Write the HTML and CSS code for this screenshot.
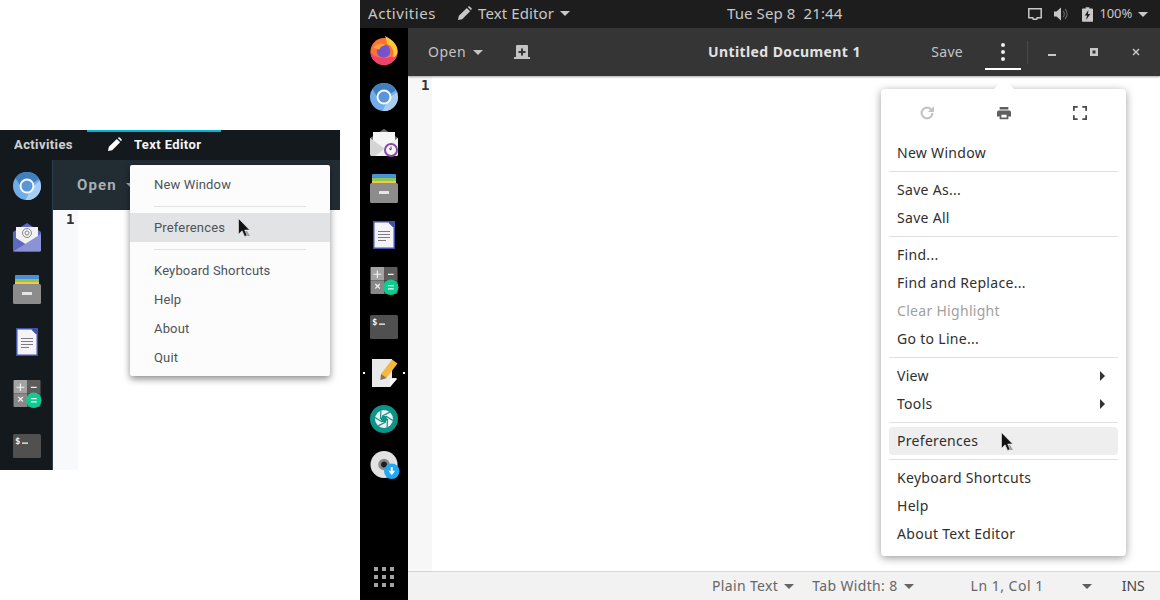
FILE: index.html
```html
<!DOCTYPE html>
<html lang="en">
<head>
<meta charset="utf-8">
<title>Text Editor</title>
<link rel="stylesheet" href="styles.css">
</head>
<body>
<svg class="defs" width="0" height="0">
  <defs>
    <symbol id="i-chromium" viewBox="0 0 28 28">
      <circle cx="14" cy="14" r="14" fill="#73ade8"/>
      <path d="M14 0a14 14 0 0 0-11.500 6L8 15h6l12-8A14 14 0 0 0 14 0z" fill="#3f7fbd"/>
      <path d="M19 15l-6.500 13a14 14 0 0 0 15.500-14l-1-5z" fill="#a6cdf2"/>
      <circle cx="14" cy="14" r="7.500" fill="#f4f8fc"/>
      <circle cx="14" cy="14" r="5.500" fill="#5c94d8"/>
    </symbol>
    <symbol id="i-folder" viewBox="0 0 28 29">
      <rect x="2" y="0" width="24" height="6" rx="1" fill="#4a90d9"/>
      <rect x="2" y="4" width="24" height="5" fill="#8bc850"/>
      <rect x="2" y="7" width="24" height="5" fill="#f7c64f"/>
      <rect x="0" y="9" width="28" height="20" rx="1.500" fill="#8c8c8c"/>
      <rect x="9" y="17" width="10" height="3" rx=".5" fill="#e6e6e6"/>
    </symbol>
    <symbol id="i-writer" viewBox="0 0 22 28">
      <path d="M0 0h22v28H0z" fill="#3f51ad"/>
      <path d="M1.500 1.500h14l5 5v20h-19z" fill="#f4f4f8"/>
      <path d="M15.500 1.500h3l2 2v3z" fill="#3f51ad"/>
      <path d="M5 10h12v1H5zM5 13h12v1H5zM5 16h12v1H5zM5 19h8v1H5z" fill="#7c7c7c"/>
    </symbol>
    <symbol id="i-calc" viewBox="0 0 30 29">
      <path d="M1 0h13v14H0V1a1 1 0 0 1 1-1z" fill="#a3a3a3"/>
      <path d="M14 0h13a1 1 0 0 1 1 1v13H14z" fill="#5c5c5c"/>
      <path d="M0 14h14v14H1a1 1 0 0 1-1-1z" fill="#888"/>
      <path d="M14 14h14v13a1 1 0 0 1-1 1H14z" fill="#5c5c5c"/>
      <path d="M6.500 3.500h1.200v3.400h3.400v1.200H7.700v3.400H6.500V8.100H3.100V6.900h3.400zM18 6.900h6v1.300h-6zM4.500 18l.9-.9 1.900 1.900 1.900-1.900.9.900-1.900 1.900 1.900 1.900-.9.900-1.900-1.900-1.900 1.900-.9-.9 1.900-1.900z" fill="#f2f2f2"/>
      <circle cx="21" cy="21" r="8" fill="#0ecb8f"/>
      <path d="M18 18.700h6v1.300h-6zM18 22h6v1.300h-6z" fill="#f2fffa"/>
    </symbol>
    <symbol id="i-terminal" viewBox="0 0 28 24">
      <rect width="28" height="24" rx="1.500" fill="#505050"/>
      <rect x="9" y="8.500" width="6" height="1.300" fill="#f2f2f2"/>
      <text x="2" y="9.500" class="term-text">$</text>
    </symbol>
    <symbol id="i-cursor" viewBox="0 0 13 21">
      <path d="M7 13l2 5h3l-3-5z" fill="#9a9a9a"/>
      <path d="M.5.500v15.800l3.600-3.500 2.500 5.700 2.500-1-2.400-5.400h5z" fill="#111" stroke="#eee" stroke-width=".6"/>
    </symbol>
    <symbol id="i-pencil" viewBox="0 0 16 16">
      <path d="M1 15l1-4.500L10.500 2 14 5.500 5.500 14zM11.500 1l.8-.5a1 1 0 0 1 1.200 0l2 2a1 1 0 0 1 0 1.200l-.5.800z" fill="currentColor"/>
    </symbol>
  </defs>
</svg>

<section class="shot shot-left">
  <div class="accent"></div>
  <header class="l-top">
    <span class="l-activities">Activities</span>
    <span class="l-app"><svg class="l-pencil"><use href="#i-pencil"/></svg>Text Editor</span>
  </header>
  <div class="l-body">
    <nav class="l-dock">
      <svg class="l-ico w28"><use href="#i-chromium"/></svg>
      <svg class="l-ico w28 h29" viewBox="0 0 28 29">
        <path d="M14 0l14 9v18a1.500 1.500 0 0 1-1.500 1.500h-25A1.500 1.500 0 0 1 0 27V9z" fill="#5d68bf"/>
        <path d="M3 4h22v11l-11 7-11-7z" fill="#f2f2f2"/>
        <circle cx="14" cy="10" r="4.500" fill="none" stroke="#888" stroke-width="1"/>
        <circle cx="14" cy="10" r="2" fill="none" stroke="#888" stroke-width="1"/>
        <path d="M0 28.500L28 11v16a1.500 1.500 0 0 1-1.500 1.500z" fill="#8a93d6"/>
      </svg>
      <svg class="l-ico w28 h29"><use href="#i-folder"/></svg>
      <svg class="l-ico w22"><use href="#i-writer"/></svg>
      <svg class="l-ico w30"><use href="#i-calc"/></svg>
      <svg class="l-ico w28 h24"><use href="#i-terminal"/></svg>
    </nav>
    <div class="l-window">
      <div class="l-head"><span class="l-open">Open</span><i class="caret l-caret"></i></div>
      <div class="l-editor"><div class="l-gutter">1</div></div>
    </div>
  </div>
  <div class="l-menu">
    <div class="l-item">New Window</div>
    <hr class="l-sep">
    <div class="l-item l-hover">Preferences</div>
    <hr class="l-sep">
    <div class="l-item">Keyboard Shortcuts</div>
    <div class="l-item">Help</div>
    <div class="l-item">About</div>
    <div class="l-item">Quit</div>
  </div>
  <svg class="cursor l-cursor"><use href="#i-cursor"/></svg>
</section>

<section class="shot shot-right">
  <header class="r-top">
    <div class="r-top-left">
      <span class="r-activities">Activities</span>
      <span class="r-app"><svg class="r-pencil"><use href="#i-pencil"/></svg>Text Editor<i class="caret r-top-caret"></i></span>
    </div>
    <div class="r-clock">Tue Sep 8&nbsp; 21:44</div>
    <div class="r-tray">
      <svg class="tray-ico" viewBox="0 0 14 14"><path d="M.8 1.800h12.400v9h-4l-.5 1.500H5.300l-.5-1.500h-4z" fill="none" stroke="currentColor" stroke-width="1.500"/></svg>
      <svg class="tray-ico" viewBox="0 0 14 14"><path d="M0 4.500h2.500L7 .5v13l-4.500-4H0z" fill="currentColor"/><path d="M9 4a4 4 0 0 1 0 6M11 2a7 7 0 0 1 0 10" fill="none" stroke="currentColor" stroke-opacity=".4" stroke-width="1.200"/></svg>
      <svg class="tray-ico batt" viewBox="0 0 12 16"><path d="M4 0h4v1.500h3a1 1 0 0 1 1 1V15a1 1 0 0 1-1 1H1a1 1 0 0 1-1-1V2.500a1 1 0 0 1 1-1h3z" fill="currentColor"/><path d="M7 3L3 9h2.500L4.500 14 9 7.500H6.500z" fill="#1d1d1d"/></svg>
      <span class="r-pct">100 %</span><i class="caret r-top-caret"></i>
    </div>
  </header>
  <div class="r-body">
    <nav class="r-dock">
      <svg class="r-ico w28 h29" viewBox="0 0 28 30">
        <circle cx="14" cy="16" r="14" fill="#ff7139"/>
        <path d="M0 16a14 14 0 0 0 28 0c-3 9-24 9-28 0z" fill="#f0436a"/>
        <path d="M15 0c5 2 13 8 13 16 0 4-3 6-5 6 2-5 0-12-6-14 0-3-1-5-2-8z" fill="#ffc93b"/>
        <circle cx="13.500" cy="15.500" r="7" fill="#7554c9"/>
        <path d="M3 12c3-4 8-5 13-3l-5 2-2 3c-2 0-4-1-6-2z" fill="#ffa436"/>
      </svg>
      <svg class="r-ico w28"><use href="#i-chromium"/></svg>
      <svg class="r-ico w28 tight" viewBox="0 0 28 28">
        <path d="M14 0l14 9v16a2 2 0 0 1-2 2H2a2 2 0 0 1-2-2V9z" fill="#707070"/>
        <path d="M3 3h22v15l-11 6-11-6z" fill="#f5f5f5"/>
        <path d="M0 9l14 10 14-10v16a2 2 0 0 1-2 2H2a2 2 0 0 1-2-2z" fill="#d4d4d4"/>
        <path d="M28 9L5 27h21a2 2 0 0 0 2-2z" fill="#f0f0f0"/>
        <circle cx="21" cy="21" r="6" fill="#f5f5f5" stroke="#8e44ad" stroke-width="2"/>
        <path d="M21 17.500V21l-2-1.500" fill="none" stroke="#444" stroke-width="1"/>
      </svg>
      <svg class="r-ico w28 h29"><use href="#i-folder"/></svg>
      <svg class="r-ico w22"><use href="#i-writer"/></svg>
      <svg class="r-ico w30"><use href="#i-calc"/></svg>
      <svg class="r-ico w28 h24"><use href="#i-terminal"/></svg>
      <div class="r-running">
        <i class="dot"></i>
        <svg class="r-ico w28" viewBox="0 0 28 28">
          <path d="M2 0h20v19l5 0-7 9H2z" fill="#e9e9e9"/>
          <path d="M20 28v-8h7z" fill="#fafafa"/>
          <path d="M11 15L22 .5l5.500 4L16.500 19l-6 2z" fill="#f5b83d"/>
          <path d="M11 15l5.500 4-6 2z" fill="#777"/>
        </svg>
        <i class="dot"></i>
      </div>
      <svg class="r-ico w28" viewBox="0 0 28 28">
        <circle cx="14" cy="14" r="14" fill="#0d9488"/>
        <circle cx="14" cy="14" r="9" fill="#f2f2f2"/>
        <path d="M17.500 14L17.100 22.500M15.750 17.030L8.200 20.900M12.250 17.030L5.100 12.400M10.500 14L10.900 5.500M12.250 10.970L19.800 7.100M15.750 10.970L22.900 15.600" fill="none" stroke="#0d9488" stroke-width="1.200"/>
        <path d="M17.500 14l-1.750 3.030h-3.500L10.500 14l1.750-3.030h3.500z" fill="#0d9488"/>
      </svg>
      <svg class="r-ico w30" viewBox="0 0 30 29">
        <circle cx="14" cy="14" r="14" fill="#e2e2e2"/>
        <circle cx="14" cy="14" r="6" fill="#8a8a8a"/>
        <circle cx="14" cy="14" r="3" fill="#1e1e1e"/>
        <circle cx="22" cy="21" r="8" fill="#22a7f0"/>
        <path d="M21 16.500h2v4h2.500L22 25l-3.500-4.500H21z" fill="#fff"/>
      </svg>
      <svg class="r-grid" viewBox="0 0 20 20">
        <path d="M0 0h4v4H0zM8 0h4v4H8zM16 0h4v4h-4zM0 8h4v4H0zM8 8h4v4H8zM16 8h4v4h-4zM0 16h4v4H0zM8 16h4v4H8zM16 16h4v4h-4z" fill="#a3a3a3"/>
      </svg>
    </nav>
    <div class="r-window">
      <div class="r-head">
        <div class="r-head-left">
          <span class="r-open">Open<i class="caret r-head-caret"></i></span>
          <svg class="r-new" viewBox="0 0 16 14"><path d="M3 0h10a1 1 0 0 1 1 1v11h2v2H0v-2h2V1a1 1 0 0 1 1-1z" fill="#c4c4c4"/><path d="M7 3.500h2V6h2.500v2H9v2.500H7V8H4.500V6H7z" fill="#353535"/></svg>
        </div>
        <div class="r-title">Untitled Document 1</div>
        <div class="r-head-right">
          <span class="r-save">Save</span>
          <span class="r-more"><i></i><i></i><i></i></span>
          <span class="r-vsep"></span>
          <span class="r-win"><svg viewBox="0 0 8 8"><path d="M0 6h8v2H0z" fill="currentColor"/></svg></span>
          <span class="r-win"><svg viewBox="0 0 8 8"><path d="M0 0h8v8H0zM2.500 2.500v3h3v-3z" fill="currentColor" fill-rule="evenodd"/></svg></span>
          <span class="r-win"><svg viewBox="0 0 8 8"><path d="M.5 1.500l1-1L4 3 6.500.5l1 1L5 4l2.500 2.500-1 1L4 5 1.500 7.500l-1-1L3 4z" fill="currentColor"/></svg></span>
        </div>
      </div>
      <div class="r-editor"><div class="r-gutter">1</div></div>
      <footer class="r-status">
        <span class="st st-lang">Plain Text<i class="caret st-caret"></i></span>
        <span class="st st-tab">Tab Width: 8<i class="caret st-caret"></i></span>
        <span class="st st-pos">Ln 1, Col 1</span>
        <i class="caret st-alone"></i>
        <span class="st-ins">INS</span>
      </footer>
    </div>
  </div>
  <div class="r-menu">
    <i class="r-arrow"></i>
    <div class="r-icons">
      <svg viewBox="1 1 14 14"><path d="M8 1.500a6.500 6.500 0 1 0 6.500 6.500h-2.200A4.300 4.300 0 1 1 8 3.700c1.200 0 2.200.5 3 1.200L9 7h6V1l-2.400 2.400A6.500 6.500 0 0 0 8 1.500z" fill="#c4c4c4"/></svg>
      <svg viewBox="0 1 16 14"><path d="M3 1h10v3H3zM2 5h12a2 2 0 0 1 2 2v5h-3v3H3v-3H0V7a2 2 0 0 1 2-2zM5 10v3h6v-3z" fill="#5f5f5f" fill-rule="evenodd"/></svg>
      <svg viewBox="2 2 12 12"><path d="M2 2h4v1.500H3.500V6H2zM10 2h4v4h-1.500V3.500H10zM2 10h1.500v2.500H6V14H2zM12.500 10H14v4h-4v-1.500h2.500z" fill="#4a4a4a"/></svg>
    </div>
    <div class="r-item">New Window</div>
    <hr class="r-sep">
    <div class="r-item">Save As...</div>
    <div class="r-item">Save All</div>
    <hr class="r-sep">
    <div class="r-item">Find...</div>
    <div class="r-item">Find and Replace...</div>
    <div class="r-item r-disabled">Clear Highlight</div>
    <div class="r-item">Go to Line...</div>
    <hr class="r-sep">
    <div class="r-item">View<i class="r-sub"></i></div>
    <div class="r-item">Tools<i class="r-sub"></i></div>
    <hr class="r-sep">
    <div class="r-item r-hover">Preferences</div>
    <hr class="r-sep">
    <div class="r-item">Keyboard Shortcuts</div>
    <div class="r-item">Help</div>
    <div class="r-item">About Text Editor</div>
  </div>
  <svg class="cursor r-cursor"><use href="#i-cursor"/></svg>
</section>
</body>
</html>
```
FILE: styles.css
```css
* { box-sizing: border-box; }
html, body { margin: 0; padding: 0; }
body { width: 1160px; height: 600px; position: relative; overflow: hidden; background: #fff; font-family: "Noto Sans", sans-serif; }
.defs { position: absolute; }
.shot { position: absolute; }
.caret { display: inline-block; width: 0; height: 0; border-left: 5px solid transparent; border-right: 5px solid transparent; border-top: 5px solid currentColor; }
.cursor { position: absolute; width: 13px; height: 21px; }
.term-text { font: 700 9px "DejaVu Sans Mono", monospace; fill: #f2f2f2; }

/* left screenshot */
.shot-left { left: 0; top: 130px; width: 340px; height: 340px; font-family: Roboto, sans-serif; }
.accent { position: absolute; left: 87px; top: 0; width: 134px; height: 2px; background: #00b4d8; }
.l-top { height: 30px; background: #14191e; color: #e4e6e8; display: flex; align-items: center; font-size: 13px; font-weight: 700; letter-spacing: .4px; padding-bottom: 2px; }
.l-activities { margin-left: 14px; opacity: .9; }
.l-app { display: flex; align-items: center; margin-left: 34px; color: #f5f5f5; }
.l-pencil { width: 15px; height: 15px; margin-right: 12px; color: #fff; }
.l-body { display: flex; height: 310px; }
.l-dock { width: 53px; background: #14191e; display: flex; flex-direction: column; align-items: center; flex: none; padding: 12px 0 0 2px; border-right: 1px solid #2c3e4a; }
.l-ico { display: block; height: 28px; flex: none; margin-bottom: 23px; }
.l-ico.w22 { width: 22px; margin-top: 1px; }
.l-ico.w28 { width: 28px; }
.l-ico.w30 { width: 30px; margin-left: 2px; margin-top: 1px; }
.l-ico.h29 { height: 29px; }
.l-ico.h24 { height: 24px; margin-top: 3px; }
.l-window { flex: 1; display: flex; flex-direction: column; }
.l-head { height: 50px; background: #222d33; display: flex; align-items: center; padding-left: 24px; color: #a9aeb2; font-size: 15px; font-weight: 700; letter-spacing: 1.1px; }
.l-caret { margin-left: 9px; border-left-width: 4px; border-right-width: 4px; border-top-width: 4px; }
.l-editor { flex: 1; background: #fff; }
.l-gutter { width: 25px; height: 100%; background: #f8f9fb; font: 700 14px "DejaVu Sans Mono", monospace; color: #333; padding: 1px 0 0 13px; }
.l-menu { position: absolute; left: 130px; top: 35px; width: 200px; height: 211px; background: #fcfcfc; border-radius: 2px; box-shadow: 0 3px 7px rgba(0, 0, 0, .45); padding-top: 5px; color: #4e5358; font-size: 13px; letter-spacing: .15px; }
.l-item { height: 29px; display: flex; align-items: center; padding-left: 24px; }
.l-hover { background: #e2e3e4; }
.l-sep { border: 0; height: 1px; background: #e3e3e3; margin: 7px 24px 6px; }
.l-cursor { left: 238px; top: 88px; }

/* right screenshot */
.shot-right { left: 360px; top: 0; width: 800px; height: 600px; font-family: "Noto Sans", sans-serif; }
.r-top { height: 28px; background: #1d1d1d; color: #c8c8c8; display: flex; align-items: center; position: relative; font-size: 15px; padding: 0 12px 0 8px; }
.r-top-left { display: flex; align-items: center; gap: 21px; padding-bottom: 2px; }
.r-activities { letter-spacing: .55px; }
.r-app { display: flex; align-items: center; letter-spacing: .1px; }
.r-pencil { width: 15px; height: 15px; margin-right: 6px; }
.r-top-caret { margin-left: 6px; }
.r-clock { position: absolute; left: 367px; top: 0; line-height: 26px; letter-spacing: .1px; }
.r-tray { margin-left: auto; display: flex; align-items: center; }
.tray-ico { width: 14px; height: 14px; margin-right: 12px; }
.tray-ico.batt { width: 11px; height: 15px; margin: 0 7px 0 2px; }
.r-pct { font-size: 13px; word-spacing: -3px; letter-spacing: -.2px; padding-bottom: 2px; }
.r-body { display: flex; height: 572px; }
.r-dock { width: 48px; height: 572px; background: #000; flex: none; display: flex; flex-direction: column; align-items: center; padding-top: 8px; position: relative; }
.r-ico { display: block; height: 28px; flex: none; margin-bottom: 18px; }
.r-ico.w22 { width: 22px; }
.r-ico.w28 { width: 28px; }
.r-ico.w30 { width: 30px; margin-left: 2px; }
.r-ico.h29 { height: 29px; }
.r-ico.tight { margin-bottom: 17px; }
.r-ico.h24 { height: 24px; margin-top: 2px; margin-bottom: 20px; }
.r-running { position: relative; width: 48px; display: flex; justify-content: center; }
.dot { position: absolute; top: 13px; width: 2px; height: 2px; background: #fff; left: 3px; }
.dot:last-child { left: 43px; }
.r-grid { width: 20px; height: 20px; margin-top: auto; margin-bottom: 13px; }
.r-window { flex: 1; display: flex; flex-direction: column; }
.r-head { height: 48px; background: #353535; color: #c4c4c4; display: flex; align-items: center; position: relative; box-shadow: 0 1px 2px rgba(0, 0, 0, .35); z-index: 1; font-size: 14px; }
.r-head-left { display: flex; align-items: center; padding-left: 20px; }
.r-open { display: flex; align-items: center; letter-spacing: .5px; padding-bottom: 2px; }
.r-head-caret { margin: 2px 0 0 7px; }
.r-new { width: 16px; height: 14px; margin-left: 31px; }
.r-title { position: absolute; left: 300px; top: 14px; font-weight: 700; color: #e2e2e2; letter-spacing: .4px; }
.r-head-right { margin-left: auto; display: flex; align-items: center; height: 48px; padding-right: 3px; }
.r-save { margin-right: 22px; letter-spacing: .3px; padding-bottom: 2px; }
.r-more { width: 36px; height: 42px; border-bottom: 2px solid #fff; display: flex; flex-direction: column; align-items: center; gap: 3px; padding-top: 15px; align-self: flex-start; }
.r-more i { width: 4px; height: 4px; border-radius: 50%; background: #eee; flex: none; }
.r-vsep { width: 1px; height: 23px; background: #4a4a4a; margin: 0 3px 0 6px; }
.r-win { width: 42px; display: flex; justify-content: center; color: #c8c8c8; }
.r-win svg { width: 8px; height: 8px; }
.r-editor { flex: 1; background: #fff; }
.r-gutter { width: 24px; height: 100%; background: #f7f7f7; font: 700 14px "DejaVu Sans Mono", monospace; color: #333; padding: 1px 0 0 13px; }
.r-status { height: 29px; background: #f2f2f2; border-top: 1px solid #d6d6d6; display: flex; align-items: center; color: #666; font-size: 14px; }
.st { display: flex; align-items: center; letter-spacing: .35px; padding-bottom: 2px; }
.st-caret { margin: 2px 0 0 6px; }
.st-lang { margin-left: 304px; }
.st-tab { margin-left: 18px; }
.st-pos { margin-left: 57px; letter-spacing: .5px; }
.st-alone { margin-left: 38px; color: #5e5e5e; }
.st-ins { margin-left: 30px; color: #444; padding-bottom: 2px; }
.r-menu { position: absolute; left: 521px; top: 89px; width: 245px; height: 467px; background: #fff; border-radius: 4px; box-shadow: 0 2px 8px rgba(0, 0, 0, .4); padding: 8px; color: #2f2f2f; font-size: 14px; z-index: 2; }
.r-arrow { position: absolute; left: 112px; top: -10px; width: 0; height: 0; border-left: 11px solid transparent; border-right: 11px solid transparent; border-bottom: 11px solid #fff; }
.r-icons { display: flex; height: 32px; margin-bottom: 10px; align-items: center; }
.r-icons svg { width: 14px; height: 14px; flex: none; }
.r-icons svg:nth-child(1) { margin-left: 31px; }
.r-icons svg:nth-child(2) { margin-left: 63px; }
.r-icons svg:nth-child(3) { margin-left: 62px; }
.r-item { height: 28px; display: flex; align-items: center; padding: 0 8px 2px; border-radius: 4px; letter-spacing: .3px; position: relative; }
.r-disabled { color: #a0a0a0; }
.r-hover { background: #eeeeee; }
.r-sep { border: 0; height: 1px; background: #e0e0e0; margin: 4px 0; }
.r-sub { position: absolute; right: 13px; top: 9px; width: 0; height: 0; border-top: 5px solid transparent; border-bottom: 5px solid transparent; border-left: 5px solid #333; }
.r-cursor { left: 641px; top: 432px; z-index: 3; }
```
